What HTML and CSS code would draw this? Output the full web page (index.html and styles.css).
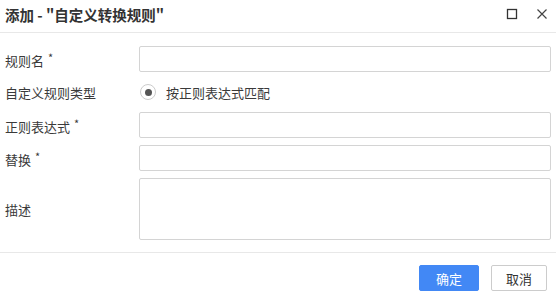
FILE: index.html
```html
<!DOCTYPE html>
<html lang="zh">
<head>
<meta charset="utf-8">
<link rel="stylesheet" href="styles.css">
</head>
<body>
<div class="dialog">
  <div class="header">
    <div class="title">添加 - "自定义转换规则"</div>
    <div class="tools">
      <svg class="icon" width="12" height="12" viewBox="0 0 12 12"><rect x="1.5" y="1.5" width="9" height="9" fill="none" stroke="#333" stroke-width="1.3"/></svg>
      <svg class="icon" width="12" height="12" viewBox="0 0 12 12"><path d="M1.5 1.5 L10.5 10.5 M10.5 1.5 L1.5 10.5" stroke="#444" stroke-width="1.2" fill="none"/></svg>
    </div>
  </div>
  <div class="body">
    <div class="row">
      <label class="label">规则名<span class="req">*</span></label>
      <input class="input" type="text">
    </div>
    <div class="row">
      <label class="label">自定义规则类型</label>
      <div class="radio-wrap"><span class="radio"><span class="dot"></span></span><span class="radio-text">按正则表达式匹配</span></div>
    </div>
    <div class="row">
      <label class="label">正则表达式<span class="req">*</span></label>
      <input class="input" type="text">
    </div>
    <div class="row">
      <label class="label">替换<span class="req">*</span></label>
      <input class="input" type="text">
    </div>
    <div class="row row-area">
      <label class="label">描述</label>
      <textarea class="input area"></textarea>
    </div>
  </div>
  <div class="footer">
    <button class="btn primary">确定</button>
    <button class="btn">取消</button>
  </div>
</div>
</body>
</html>
```
FILE: styles.css
```css
html, body {
  margin: 0;
  padding: 0;
  background: #fff;
}
body {
  font-family: "Noto Sans CJK SC", "Noto Sans", sans-serif;
  color: #3a3a3a;
  font-size: 13px;
}
.dialog {
  width: 556px;
  height: 295px;
  display: flex;
  flex-direction: column;
}
.header {
  height: 32px;
  border-bottom: 1px solid #e8e8e8;
  display: flex;
  align-items: center;
  justify-content: space-between;
  padding: 0 8px 0 5px;
}
.title {
  font-size: 14.5px;
  font-weight: bold;
  color: #333;
  margin-top: -4px;
}
.tools {
  display: flex;
  gap: 18px;
  align-items: center;
  margin-top: -4px;
}
.icon { display: block; }
.body {
  padding: 13px 5px 12px 5px;
  display: flex;
  flex-direction: column;
  gap: 7px;
  border-bottom: 1px solid #e8e8e8;
}
.row {
  display: flex;
  align-items: center;
  height: 26px;
}
.row-area { height: 62px; }
.label {
  width: 134px;
  flex: none;
  color: #3a3a3a;
  font-size: 13px;
}
.req {
  font-size: 11px;
  vertical-align: 4px;
  margin-left: 4px;
}
.input {
  flex: 1;
  height: 26px;
  box-sizing: border-box;
  border: 1px solid #d4d4d4;
  border-radius: 2px;
  margin: 0;
  padding: 0 6px;
  font: inherit;
  background: #fff;
}
.area {
  height: 62px;
  resize: none;
}
.radio-wrap {
  display: flex;
  align-items: center;
  gap: 10px;
  margin-left: 1px;
}
.radio {
  width: 14px;
  height: 14px;
  border: 1px solid #ccc;
  border-radius: 50%;
  display: flex;
  align-items: center;
  justify-content: center;
}
.dot {
  width: 7px;
  height: 7px;
  border-radius: 50%;
  background: #555;
}
.footer {
  display: flex;
  justify-content: flex-end;
  gap: 12px;
  padding: 12px 9px 0 0;
}
.btn {
  height: 26px;
  width: 56px;
  border: 1px solid #ccc;
  border-radius: 2px;
  background: #fff;
  color: #333;
  font-family: inherit;
  font-size: 13px;
  padding: 0;
}
.btn.primary {
  background: #4288f5;
  border-color: #4288f5;
  color: #fff;
  width: 60px;
}
```
